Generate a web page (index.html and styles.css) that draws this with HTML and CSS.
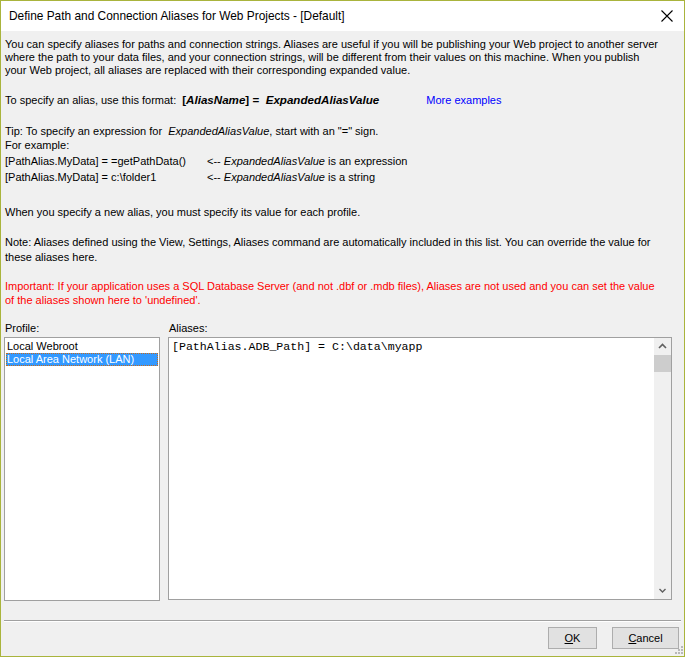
FILE: index.html
```html
<!DOCTYPE html>
<html lang="en">
<head>
    <meta charset="UTF-8">
    <title>Define Path and Connection Aliases for Web Projects - [Default]</title>
    <link rel="stylesheet" href="styles.css">
</head>
<body>
    <div class="dialog">
        <div class="titlebar">
            <span class="title">Define Path and Connection Aliases for Web Projects - [Default]</span>
            <svg class="close" width="12" height="12" viewBox="0 0 12 12">
                <path d="M0.5 0.5 L11.5 11.5 M11.5 0.5 L0.5 11.5" stroke="#000" stroke-width="1.1" fill="none"/>
            </svg>
        </div>

        <div class="content">
            <div class="info">
                <p class="intro">You can specify aliases for paths and connection strings. Aliases are useful if you will be publishing your Web project to another server where the path to your data files, and your connection strings, will be different from their values on this machine. When you publish your Web project, all aliases are replaced with their corresponding expanded value.</p>

                <div class="format">
                    <span>To specify an alias, use this format:</span>
                    <span class="syntax"><b>[<i>AliasName</i>] = &nbsp;<i>ExpandedAliasValue</i></b></span>
                    <a class="more">More examples</a>
                </div>

                <p class="tip">Tip: To specify an expression for <i>&nbsp;ExpandedAliasValue</i>, start with an "=" sign.<br>For example:</p>

                <div class="examples">
                    <span>[PathAlias.MyData] = =getPathData()</span>
                    <span>&lt;-- <i>ExpandedAliasValue</i> is an expression</span>
                    <span>[PathAlias.MyData] = c:\folder1</span>
                    <span>&lt;-- <i>ExpandedAliasValue</i> is a string</span>
                </div>

                <p class="profile-note">When you specify a new alias, you must specify its value for each profile.</p>

                <p class="note">Note: Aliases defined using the View, Settings, Aliases command are automatically included in this list. You can override the value for these aliases here.</p>

                <p class="important">Important: If your application uses a SQL Database Server (and not .dbf or .mdb files), Aliases are not used and you can set the value of the aliases shown here to 'undefined'.</p>
            </div>

            <div class="panes">
                <div class="pane">
                    <label>Profile:</label>
                    <ul class="listbox">
                        <li>Local Webroot</li>
                        <li class="selected">Local Area Network (LAN)</li>
                    </ul>
                </div>
                <div class="pane">
                    <label>Aliases:</label>
                    <div class="editor">
                        <div class="editor-text">[PathAlias.ADB_Path] = C:\data\myapp</div>
                        <div class="scrollbar">
                            <svg width="17" height="17" viewBox="0 0 17 17">
                                <path d="M5 10 L8.5 6.5 L12 10" stroke="#606060" stroke-width="1.6" fill="none"/>
                            </svg>
                            <div class="thumb"></div>
                            <div class="track"></div>
                            <svg width="17" height="17" viewBox="0 0 17 17">
                                <path d="M5.5 7 L8.5 10 L11.5 7" stroke="#606060" stroke-width="1.4" fill="none"/>
                            </svg>
                        </div>
                    </div>
                </div>
            </div>
        </div>

        <div class="footer">
            <div class="buttons">
                <button class="ok"><u>O</u>K</button>
                <button class="cancel"><u>C</u>ancel</button>
            </div>
            <svg class="grip" width="8" height="8" viewBox="0 0 8 8">
                <rect x="6" y="0" width="2" height="2" fill="#b8b8b8"/>
                <rect x="3" y="3" width="2" height="2" fill="#b8b8b8"/>
                <rect x="6" y="3" width="2" height="2" fill="#b8b8b8"/>
                <rect x="0" y="6" width="2" height="2" fill="#b8b8b8"/>
                <rect x="3" y="6" width="2" height="2" fill="#b8b8b8"/>
                <rect x="6" y="6" width="2" height="2" fill="#b8b8b8"/>
            </svg>
        </div>
    </div>
</body>
</html>
```

FILE: styles.css
```css
* {
    box-sizing: border-box;
    margin: 0;
    padding: 0;
}

body {
    font-family: "Liberation Sans", Arial, sans-serif;
    font-size: 11px;
    line-height: 13px;
    color: #000;
    background: #f0f0f0;
}

.dialog {
    width: 685px;
    height: 657px;
    border: 1px solid #a9b43c;
    background: #f0f0f0;
    display: flex;
    flex-direction: column;
}

.titlebar {
    height: 30px;
    background: #fff;
    display: flex;
    align-items: center;
    justify-content: space-between;
    padding: 0 11px 0 8px;
}

.title {
    font-size: 11.9px;
}

.content {
    flex: 1;
    padding: 7px 12px 0 3px;
}

.info {
    padding-left: 1px;
    max-width: 658px;
}

.intro {
    margin-bottom: 16px;
}

.format {
    display: flex;
    align-items: baseline;
}

.syntax {
    font-size: 11.6px;
    margin-left: 6px;
}

.more {
    color: #0000ff;
    margin-left: 47px;
}

.tip {
    margin-top: 17px;
    line-height: 14px;
}

.examples {
    display: grid;
    grid-template-columns: 202px auto;
    justify-content: start;
    margin-top: 1px;
    line-height: 16px;
}

.profile-note {
    margin-top: 21px;
}

.note {
    margin-top: 16px;
    line-height: 15px;
}

.important {
    max-width: 650px;
    margin-top: 14px;
    line-height: 14px;
    color: #ff0000;
}

.panes {
    display: grid;
    grid-template-columns: 156px 504px;
    gap: 8px;
    margin-top: 15px;
}

.pane label {
    display: block;
    margin-left: 1px;
    margin-bottom: 2px;
}

.listbox {
    list-style: none;
    height: 264px;
    background: #fff;
    border: 1px solid #a0a0a0;
    padding: 2px 1px 1px;
}

.listbox li {
    height: 13px;
    line-height: 13px;
    padding-left: 1px;
}

.listbox .selected {
    background: #3399ff;
    color: #fff;
    outline: 1px dotted #c86a1a;
    outline-offset: -1px;
}

.editor {
    display: flex;
    height: 263px;
    background: #fff;
    border: 1px solid #a0a0a0;
}

.editor-text {
    flex: 1;
    padding: 2px 0 0 3px;
    font-family: "Liberation Mono", "Courier New", monospace;
    font-size: 11.6px;
    line-height: 13px;
}

.scrollbar {
    width: 17px;
    background: #f0f0f0;
    display: flex;
    flex-direction: column;
}

.thumb {
    height: 17px;
    background: #cdcdcd;
}

.track {
    flex: 1;
}

.footer {
    position: relative;
    height: 36px;
    margin: 0 3px;
    border-top: 1px solid #a0a0a0;
    box-shadow: inset 0 1px 0 #fff;
}

.buttons {
    display: flex;
    justify-content: flex-end;
    gap: 15px;
    padding: 6px 2px 0 0;
}

.buttons button {
    height: 22px;
    font-family: inherit;
    font-size: 11px;
    background: #e1e1e1;
    border: 1px solid #adadad;
    color: #000;
}

.ok {
    width: 49px;
}

.cancel {
    width: 67px;
}

.grip {
    position: absolute;
    right: -2px;
    bottom: 2px;
}
```
